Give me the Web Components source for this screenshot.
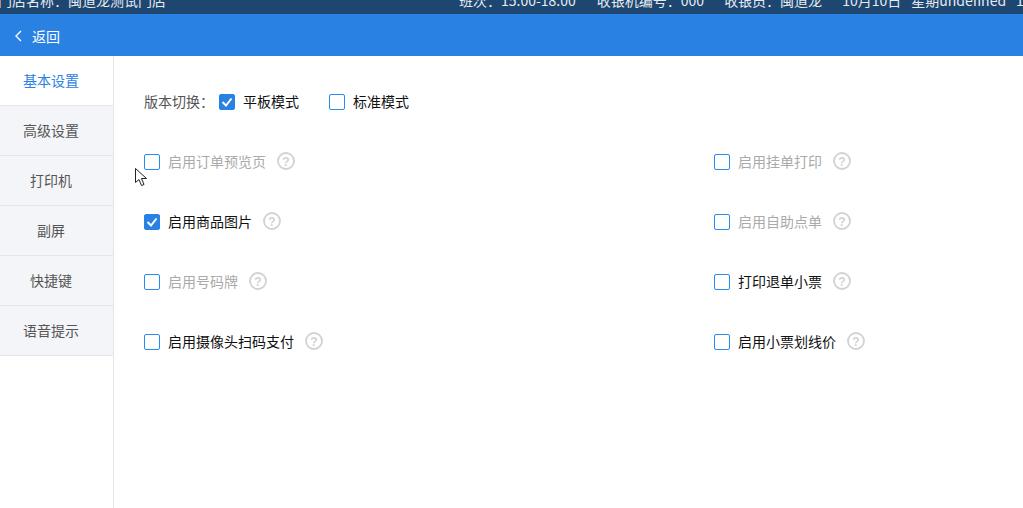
<!DOCTYPE html>
<html>
<head>
<meta charset="utf-8">
<style>
  html, body { margin: 0; height: 100%; overflow: hidden; background: #fff; }
  body { font-family: "Noto Sans CJK SC", "Liberation Sans", sans-serif; font-size: 14px; }
</style>
</head>
<body>
<settings-page>
  <status-bar slot="status"></status-bar>
  <back-bar slot="back">返回</back-bar>
  <side-menu slot="menu">
    <menu-item active>基本设置</menu-item>
    <menu-item>高级设置</menu-item>
    <menu-item>打印机</menu-item>
    <menu-item>副屏</menu-item>
    <menu-item>快捷键</menu-item>
    <menu-item>语音提示</menu-item>
  </side-menu>
  <version-row>
    <check-box checked>平板模式</check-box>
    <check-box>标准模式</check-box>
  </version-row>
  <option-grid>
    <check-box disabled help>启用订单预览页</check-box>
    <check-box disabled help>启用挂单打印</check-box>
    <check-box checked help>启用商品图片</check-box>
    <check-box disabled help>启用自助点单</check-box>
    <check-box disabled help>启用号码牌</check-box>
    <check-box help>打印退单小票</check-box>
    <check-box help>启用摄像头扫码支付</check-box>
    <check-box help>启用小票划线价</check-box>
  </option-grid>
  <mouse-cursor></mouse-cursor>
</settings-page>

<script>
class SettingsPage extends HTMLElement {
  constructor() {
    super();
    this.attachShadow({ mode: 'open' }).innerHTML = `
      <style>
        :host { display: flex; flex-direction: column; height: 508px; position: relative; }
        .body { flex: 1; display: flex; min-height: 0; }
        .content { flex: 1; padding: 29px 30px 0; }
      </style>
      <slot name="status"></slot>
      <slot name="back"></slot>
      <div class="body">
        <slot name="menu"></slot>
        <div class="content"><slot></slot></div>
      </div>`;
  }
}

class StatusBar extends HTMLElement {
  constructor() {
    super();
    this.attachShadow({ mode: 'open' }).innerHTML = `
      <style>
        :host { display: block; height: 14px; overflow: hidden; background: #1d4671; color: #e6ebf0; }
        .row { display: flex; height: 20px; margin-top: -10px; white-space: nowrap; font-size: 14px; line-height: 20px; }
        .left { width: 461px; margin-left: -2px; flex: none; }
        .right { display: flex; gap: 20px; }
        .right span.shift { margin-left: 1px; }
        .right span.near { margin-left: -10px; }
      </style>
      <div class="row">
        <div class="left">门店名称：闽道龙测试门店</div>
        <div class="right">
          <span>班次：15:00-18:00</span>
          <span class="shift">收银机编号：000</span>
          <span>收银员：闽道龙</span>
          <span>10月10日</span>
          <span class="near">星期undefined</span>
          <span class="near">15:</span>
        </div>
      </div>`;
  }
}

class BackBar extends HTMLElement {
  constructor() {
    super();
    this.attachShadow({ mode: 'open' }).innerHTML = `
      <style>
        :host { display: flex; align-items: center; gap: 10px; box-sizing: border-box; height: 42px; padding: 2px 0 0 14px; background: #2a81e4; color: #fff; font-size: 14px; }
        svg { display: block; }
      </style>
      <svg width="8" height="12" viewBox="0 0 8 12"><path d="M7 1 L2 6 L7 11" fill="none" stroke="#fff" stroke-width="1.4"/></svg>
      <slot></slot>`;
  }
}

class SideMenu extends HTMLElement {
  constructor() {
    super();
    this.attachShadow({ mode: 'open' }).innerHTML = `
      <style>
        :host { display: block; width: 113px; border-right: 1px solid #e6e6e9; flex: none; }
      </style>
      <slot></slot>`;
  }
}

class MenuItem extends HTMLElement {
  constructor() {
    super();
    this.attachShadow({ mode: 'open' }).innerHTML = `
      <style>
        :host { display: flex; align-items: center; justify-content: center; box-sizing: content-box; height: 47px; padding: 0 11px 2px 0; background: #f4f5f9; color: #555; border-bottom: 1px solid #e6e6e9; font-size: 14px; }
        :host([active]) { background: #fff; color: #2a81e4; }
      </style>
      <slot></slot>`;
  }
}

class VersionRow extends HTMLElement {
  constructor() {
    super();
    this.attachShadow({ mode: 'open' }).innerHTML = `
      <style>
        :host { display: flex; align-items: center; height: 32px; color: #555; }
        .label { width: 75px; }
        .opts { display: flex; gap: 30px; }
      </style>
      <div class="label">版本切换：</div>
      <div class="opts"><slot></slot></div>`;
  }
}

class OptionGrid extends HTMLElement {
  constructor() {
    super();
    this.attachShadow({ mode: 'open' }).innerHTML = `
      <style>
        :host { display: grid; grid-template-columns: 570px 1fr; grid-auto-rows: 60px; margin-top: 34px; }
      </style>
      <slot></slot>`;
  }
}

class CheckBox extends HTMLElement {
  constructor() {
    super();
    const help = this.hasAttribute('help');
    this.attachShadow({ mode: 'open' }).innerHTML = `
      <style>
        :host { display: flex; align-items: flex-start; color: #111; font-size: 14px; line-height: 20px; }
        :host([disabled]) { color: #aaa; }
        .box { width: 14px; height: 14px; margin: 3px 8px 0 0; border: 1px solid #2a8cf0; border-radius: 2px; background: #fff; flex: none; }
        :host([checked]) .box { background: #2a81e4; border-color: #2a81e4; }
        .box svg { display: none; }
        :host([checked]) .box svg { display: block; }
        .help { margin: 1px 0 0 11px; display: block; }
      </style>
      <span class="box"><svg width="14" height="14" viewBox="0 0 14 14"><path d="M2.5 7 L6 10.5 L11.5 3.5" fill="none" stroke="#fff" stroke-width="2"/></svg></span>
      <slot></slot>
      ${help ? `<svg class="help" width="18" height="18" viewBox="0 0 18 18"><circle cx="9" cy="9" r="8" fill="none" stroke="#d2d2d2" stroke-width="1.8"/><text x="9" y="13.5" text-anchor="middle" font-size="12" font-weight="bold" fill="#d2d2d2" font-family="Liberation Sans, sans-serif">?</text></svg>` : ''}`;
  }
}

class MouseCursor extends HTMLElement {
  constructor() {
    super();
    this.attachShadow({ mode: 'open' }).innerHTML = `
      <style>
        :host { position: absolute; left: 135px; top: 168px; display: block; width: 13px; height: 20px; }
        svg { display: block; }
      </style>
      <svg width="13" height="20" viewBox="0 0 13 20"><path d="M0.5 0.5 L0.5 14.5 L4 11.5 L6.5 17.5 L9 16.5 L6.5 10.5 L11.5 10.5 Z" fill="#fff" stroke="#222" stroke-width="1"/></svg>`;
  }
}

customElements.define('settings-page', SettingsPage);
customElements.define('status-bar', StatusBar);
customElements.define('back-bar', BackBar);
customElements.define('side-menu', SideMenu);
customElements.define('menu-item', MenuItem);
customElements.define('version-row', VersionRow);
customElements.define('option-grid', OptionGrid);
customElements.define('check-box', CheckBox);
customElements.define('mouse-cursor', MouseCursor);
</script>
</body>
</html>
